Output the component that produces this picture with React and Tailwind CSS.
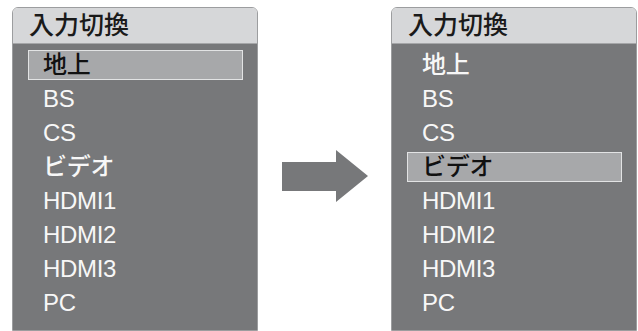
import React from 'react';

const ITEMS = ['地上', 'BS', 'CS', 'ビデオ', 'HDMI1', 'HDMI2', 'HDMI3', 'PC'];

const InputMenu = ({ selected, className }) => {
  return (
    <div className={`flex flex-col w-[246px] h-[324px] rounded-t-[6px] border border-[#9c9d9f] overflow-hidden ${className}`}>
      {/* Title */}
      <div className="h-[36px] shrink-0 bg-[#d6d7d9] border-b border-[#a5a6a8] flex items-center pl-[16px] text-[25px] font-medium leading-none text-[#1a1a1a]">
        入力切換
      </div>

      {/* List */}
      <div className="flex-1 bg-[#77787a] pt-[4px] font-medium">
        {ITEMS.map((item) => (
          <div key={item} className="h-[34px] flex items-center">
            {item === selected ? (
              <div className="ml-[15px] mr-[14px] h-[30px] flex-1 flex items-center bg-[#a7a8aa] border border-[#e2e3e4] pl-[14px] text-[24px] leading-none text-[#111] tracking-[-0.3px]">
                {item}
              </div>
            ) : (
              <div className="pl-[30px] text-[24px] leading-none text-[#f7f7f7] tracking-[-0.3px]">{item}</div>
            )}
          </div>
        ))}
      </div>
    </div>
  );
};

const Arrow = () => (
  <svg width="86" height="52" viewBox="0 0 86 52" className="shrink-0">
    <polygon points="0,12 54,12 54,0 86,26 54,52 54,41 0,41" fill="#77787a" />
  </svg>
);

export default function App() {
  return (
    <div
      className="w-[638px] h-[331px] bg-white overflow-hidden flex items-start pt-[7px] pl-[12px]"
      style={{ fontFamily: '"Liberation Sans", "Noto Sans CJK JP", Arial, sans-serif' }}
    >
      <InputMenu selected="地上" />
      <div className="w-[133px] h-full flex items-start justify-center pt-[143px] pl-[1px]">
        <Arrow />
      </div>
      <InputMenu selected="ビデオ" />
    </div>
  );
}
